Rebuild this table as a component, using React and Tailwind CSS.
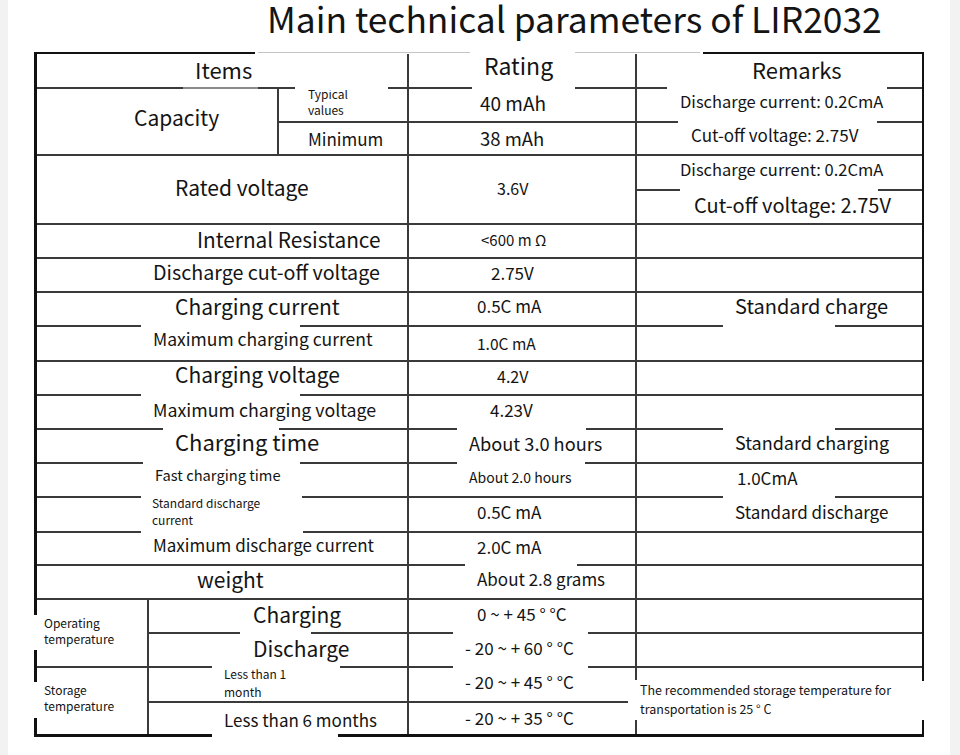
import React from 'react';

const Cell = ({ className = '', children }) => (
    <div className={`bg-white flex items-center ${className}`}>{children}</div>
);

const Mask = ({ className }) => <div className={`absolute bg-white ${className}`}></div>;

const App = () => {
    return (
        <div className="min-h-[755px] bg-[#f2f2f2] font-['Noto_Sans_CJK_SC','Noto_Sans',sans-serif] text-[#141414]">
            <div className="ml-[8px] w-[942px] h-[755px] bg-white">
                <div className="h-[52px] pl-[259px]">
                    <h1 className="text-[35.4px] leading-[36px]">Main technical parameters of LIR2032</h1>
                </div>

                <div className="relative ml-[26px] w-[890px] bg-[#111] pt-[2px] pl-[3px] pr-[2px] pb-[3px]">
                    <div className="grid gap-[2px] bg-[#3a3a3a] grid-cols-[110px_128px_128px_226px_285px] grid-rows-[33px_32px_31px_33px_32px_32px_32px_32px_33px_32px_32px_32px_32px_33px_31px_32px_32px_32px_33px_31px]">
                        {/* header */}
                        <Cell className="col-start-1 col-span-3 row-start-1 pl-[158px] text-[22px] pb-[2px]">Items</Cell>
                        <Cell className="col-start-4 row-start-1 pl-[75px] text-[23px] pb-[10px]">Rating</Cell>
                        <Cell className="col-start-5 row-start-1 pl-[115px] text-[22px] pb-[2px]">Remarks</Cell>

                        {/* capacity */}
                        <Cell className="col-start-1 col-span-2 row-start-2 row-span-2 pl-[97px] pb-[8px] text-[21px]">Capacity</Cell>
                        <Cell className="col-start-3 row-start-2 pl-[29px] text-[12px] leading-[16px] pb-[6px]">
                            <span>Typical<br />values</span>
                        </Cell>
                        <Cell className="col-start-4 row-start-2 pl-[71px] text-[19px] pb-[4px]">40 mAh</Cell>
                        <Cell className="col-start-5 row-start-2 pl-[43px] text-[16.5px] pb-[8px]">Discharge current: 0.2CmA</Cell>
                        <Cell className="col-start-3 row-start-3 pl-[29px] text-[17px]">Minimum</Cell>
                        <Cell className="col-start-4 row-start-3 pl-[71px] text-[18.5px]">38 mAh</Cell>
                        <Cell className="col-start-5 row-start-3 pl-[54px] text-[17px] pb-[7px]">Cut-off voltage: 2.75V</Cell>

                        {/* rated voltage */}
                        <Cell className="col-start-1 col-span-3 row-start-4 row-span-2 pl-[138px] text-[21px] pb-[4px]">Rated voltage</Cell>
                        <Cell className="col-start-4 row-start-4 row-span-2 pl-[88px] text-[16px] pb-[4px]">3.6V</Cell>
                        <Cell className="col-start-5 row-start-4 pl-[43px] text-[16.5px] pb-[6px]">Discharge current: 0.2CmA</Cell>
                        <Cell className="col-start-5 row-start-5 pl-[57px] text-[20px] pb-[4px]">Cut-off voltage: 2.75V</Cell>

                        <Cell className="col-start-1 col-span-3 row-start-6 pl-[160px] text-[20.8px] pb-[2px]">Internal Resistance</Cell>
                        <Cell className="col-start-4 row-start-6 pl-[72px] text-[15px] pb-[2px]">&lt;600 m Ω</Cell>
                        <Cell className="col-start-5 row-start-6"></Cell>

                        <Cell className="col-start-1 col-span-3 row-start-7 pl-[116px] text-[19.7px] pb-[6px]">Discharge cut-off voltage</Cell>
                        <Cell className="col-start-4 row-start-7 pl-[82px] text-[17px] pb-[4px]">2.75V</Cell>
                        <Cell className="col-start-5 row-start-7"></Cell>

                        <Cell className="col-start-1 col-span-3 row-start-8 pl-[138px] text-[21px] pb-[4px]">Charging current</Cell>
                        <Cell className="col-start-4 row-start-8 pl-[68px] text-[17px] pb-[6px]">0.5C mA</Cell>
                        <Cell className="col-start-5 row-start-8 pl-[98px] text-[20px] pb-[6px]">Standard charge</Cell>

                        <Cell className="col-start-1 col-span-3 row-start-9 pl-[116px] text-[17.5px] pb-[9px]">Maximum charging current</Cell>
                        <Cell className="col-start-4 row-start-9 pl-[68px] text-[15.5px]">1.0C mA</Cell>
                        <Cell className="col-start-5 row-start-9"></Cell>

                        <Cell className="col-start-1 col-span-3 row-start-10 pl-[138px] text-[21px] pb-[6px]">Charging voltage</Cell>
                        <Cell className="col-start-4 row-start-10 pl-[88px] text-[16px] pb-[4px]">4.2V</Cell>
                        <Cell className="col-start-5 row-start-10"></Cell>

                        <Cell className="col-start-1 col-span-3 row-start-11 pl-[116px] text-[17.8px] pb-[6px]">Maximum charging voltage</Cell>
                        <Cell className="col-start-4 row-start-11 pl-[81px] text-[17px] pb-[4px]">4.23V</Cell>
                        <Cell className="col-start-5 row-start-11"></Cell>

                        <Cell className="col-start-1 col-span-3 row-start-12 pl-[138px] text-[22px] pb-[10px]">Charging time</Cell>
                        <Cell className="col-start-4 row-start-12 pl-[60px] text-[18.2px] pb-[4px]">About 3.0 hours</Cell>
                        <Cell className="col-start-5 row-start-12 pl-[98px] text-[18px] pb-[8px]">Standard charging</Cell>

                        <Cell className="col-start-1 col-span-3 row-start-13 pl-[118px] text-[14.7px] pb-[9px]">Fast charging time</Cell>
                        <Cell className="col-start-4 row-start-13 pl-[60px] text-[14px] pb-[6px]">About 2.0 hours</Cell>
                        <Cell className="col-start-5 row-start-13 pl-[100px] text-[17px] pb-[4px]">1.0CmA</Cell>

                        <Cell className="col-start-1 col-span-3 row-start-14 pl-[115px] text-[12px] leading-[17px] pb-[7px]">
                            <span>Standard discharge<br />current</span>
                        </Cell>
                        <Cell className="col-start-4 row-start-14 pl-[68px] text-[17px] pb-[6px]">0.5C mA</Cell>
                        <Cell className="col-start-5 row-start-14 pl-[98px] text-[17px] pb-[6px]">Standard discharge</Cell>

                        <Cell className="col-start-1 col-span-3 row-start-15 pl-[116px] text-[17px] pb-[8px]">Maximum discharge current</Cell>
                        <Cell className="col-start-4 row-start-15 pl-[68px] text-[17px] pb-[4px]">2.0C mA</Cell>
                        <Cell className="col-start-5 row-start-15"></Cell>

                        <Cell className="col-start-1 col-span-3 row-start-16 pl-[160px] text-[21px] pb-[4px]">weight</Cell>
                        <Cell className="col-start-4 row-start-16 pl-[68px] text-[17px] pb-[6px]">About 2.8 grams</Cell>
                        <Cell className="col-start-5 row-start-16"></Cell>

                        {/* temperatures */}
                        <Cell className="col-start-1 row-start-17 row-span-2 pl-[7px] pb-[4px] text-[12px] leading-[16px]">
                            <span>Operating<br />temperature</span>
                        </Cell>
                        <Cell className="col-start-2 col-span-2 row-start-17 pl-[104px] text-[21px] pb-[2px]">Charging</Cell>
                        <Cell className="col-start-4 row-start-17 pl-[68px] text-[17px] pb-[4px]">0 ~ + 45 ° °C</Cell>
                        <Cell className="col-start-5 row-start-17"></Cell>

                        <Cell className="col-start-2 col-span-2 row-start-18 pl-[104px] text-[21px] pb-[3px]">Discharge</Cell>
                        <Cell className="col-start-4 row-start-18 pl-[56px] text-[17px] pb-[4px]">- 20 ~ + 60 ° °C</Cell>
                        <Cell className="col-start-5 row-start-18"></Cell>

                        <Cell className="col-start-1 row-start-19 row-span-2 pl-[7px] pb-[6px] text-[12px] leading-[16px]">
                            <span>Storage<br />temperature</span>
                        </Cell>
                        <Cell className="col-start-2 col-span-2 row-start-19 pl-[75px] text-[12px] leading-[18px] pb-[4px]">
                            <span>Less than 1<br />month</span>
                        </Cell>
                        <Cell className="col-start-4 row-start-19 pl-[56px] text-[17px] pb-[6px]">- 20 ~ + 45 ° °C</Cell>
                        <Cell className="col-start-5 row-start-19 row-span-2 pl-[3px] text-[12.5px] leading-[19px] pb-[4px]">
                            <span>The recommended storage temperature for<br />transportation is 25 ° C</span>
                        </Cell>

                        <Cell className="col-start-2 col-span-2 row-start-20 pl-[75px] text-[17px] pt-[2px]">Less than 6 months</Cell>
                        <Cell className="col-start-4 row-start-20 pl-[56px] text-[17px] pb-[2px]">- 20 ~ + 35 ° °C</Cell>
                    </div>

                    {/* broken line segments, as in the scanned table */}
                    <Mask className="left-[221px] top-0 w-[448px] h-[2px]" />
                    <div className="absolute left-[224px] top-0 w-[212px] h-px bg-[#c4c4c4]"></div>
                    <div className="absolute left-[541px] top-0 w-[125px] h-px bg-[#c4c4c4]"></div>

                    <div className="absolute left-[149px] top-[35px] w-[75px] h-[2px] bg-[#8a8a8a]"></div>
                    <Mask className="left-[261px] top-[34px] w-[93px] h-[4px]" />
                    <Mask className="left-[438px] top-[34px] w-[103px] h-[4px]" />
                    <Mask className="left-[633px] top-[34px] w-[220px] h-[4px]" />
                    <Mask className="left-[644px] top-[68px] w-[199px] h-[4px]" />
                    <Mask className="left-[646px] top-[137px] w-[198px] h-[4px]" />

                    <Mask className="left-[107px] top-[272px] w-[159px] h-[4px]" />
                    <Mask className="left-[689px] top-[272px] w-[112px] h-[4px]" />
                    <Mask className="left-[107px] top-[341px] w-[159px] h-[4px]" />
                    <Mask className="left-[129px] top-[375px] w-[116px] h-[4px]" />
                    <Mask className="left-[423px] top-[375px] w-[129px] h-[4px]" />
                    <Mask className="left-[689px] top-[375px] w-[112px] h-[4px]" />
                    <Mask className="left-[109px] top-[409px] w-[157px] h-[4px]" />
                    <Mask className="left-[423px] top-[409px] w-[128px] h-[4px]" />
                    <Mask className="left-[107px] top-[443px] w-[161px] h-[4px]" />
                    <Mask className="left-[689px] top-[443px] w-[112px] h-[4px]" />
                    <Mask className="left-[107px] top-[478px] w-[162px] h-[4px]" />
                    <Mask className="left-[431px] top-[511px] w-[112px] h-[4px]" />
                    <Mask className="left-[206px] top-[579px] w-[71px] h-[4px]" />
                    <Mask className="left-[419px] top-[579px] w-[135px] h-[4px]" />
                    <Mask className="left-[178px] top-[613px] w-[128px] h-[4px]" />
                    <Mask className="left-[419px] top-[613px] w-[135px] h-[4px]" />
                    <Mask className="left-[594px] top-[648px] w-[8px] h-[4px]" />
                    <Mask className="left-[178px] top-[682px] w-[126px] h-[3px]" />

                    <Mask className="left-0 top-[563px] w-[3px] h-[35px]" />
                    <Mask className="left-0 top-[630px] w-[3px] h-[36px]" />
                    <Mask className="left-[601px] top-[628px] w-[2px] h-[40px]" />
                    <Mask className="left-[888px] top-[629px] w-[2px] h-[39px]" />
                </div>
            </div>
        </div>
    );
};

export default App;
